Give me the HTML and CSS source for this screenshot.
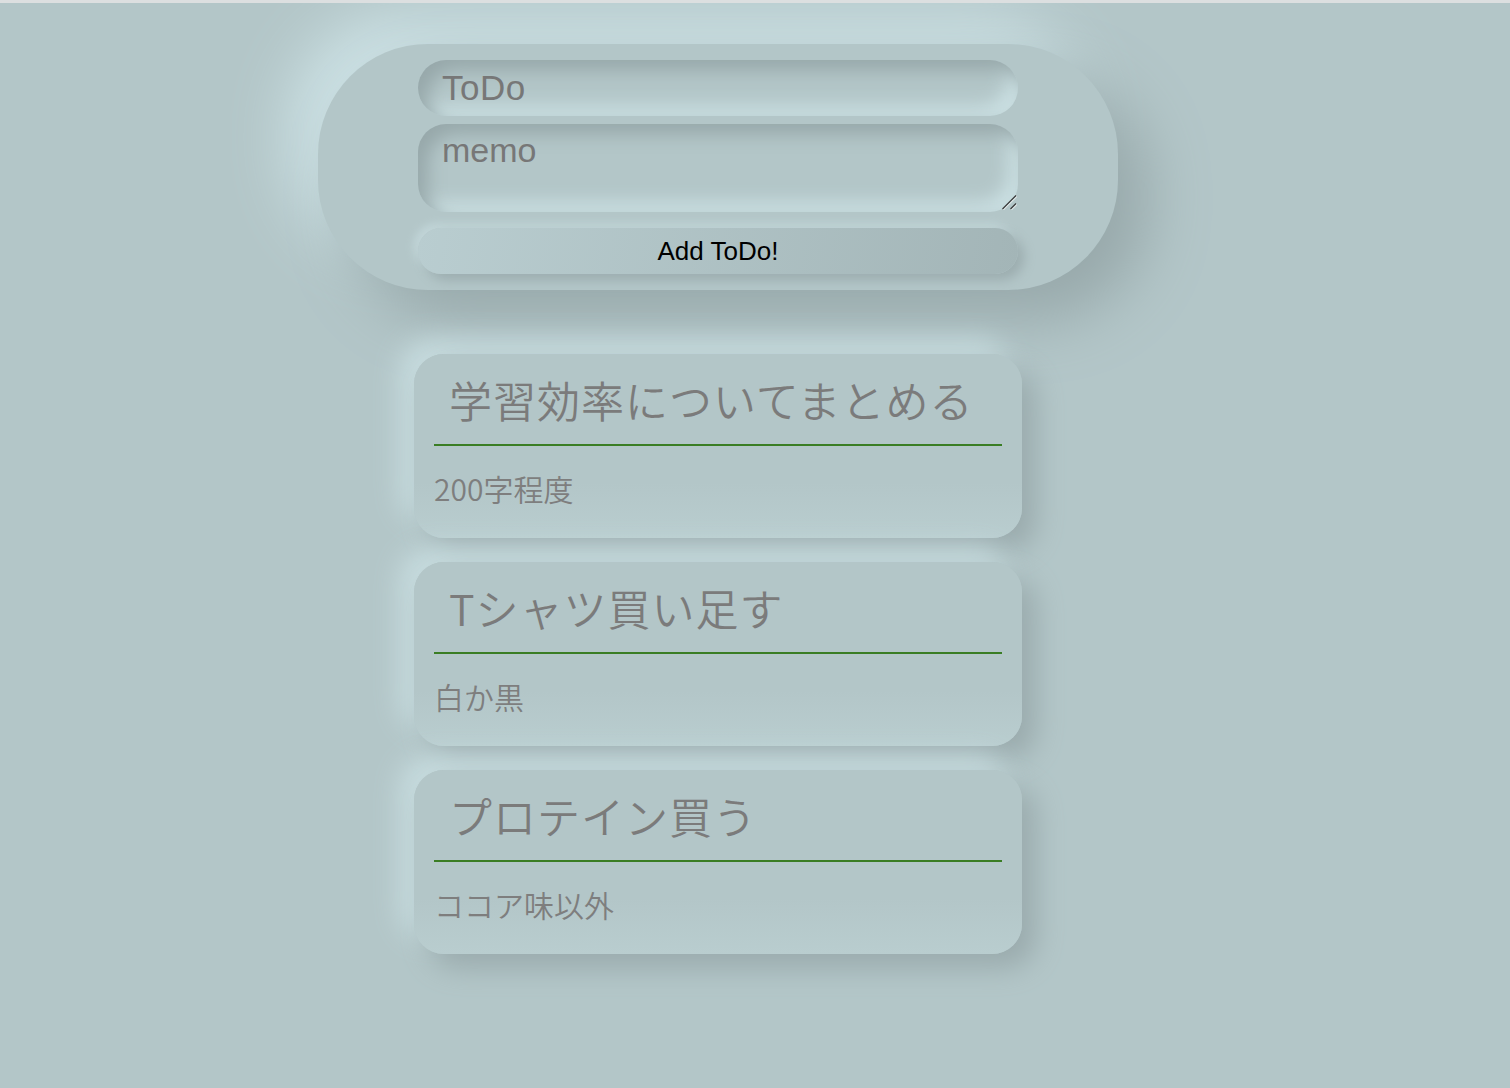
FILE: index.html
```html
<!DOCTYPE html>
<html lang="ja">
<head>
<meta charset="utf-8">
<title>ToDo</title>
<link rel="stylesheet" href="styles.css">
</head>
<body>
<div class="page">
  <form class="add-form">
    <input class="field field-title" type="text" placeholder="ToDo">
    <div class="memo-wrap">
      <textarea class="field field-memo" placeholder="memo"></textarea>
      <svg class="resizer" width="16" height="16" viewBox="0 0 16 16" aria-hidden="true">
        <line x1="1.5" y1="15" x2="15" y2="1.5" stroke="#ffffff" stroke-width="1.2" stroke-opacity="0.7" transform="translate(0.8,0.8)"/>
        <line x1="1.5" y1="15" x2="15" y2="1.5" stroke="#3a3a3a" stroke-width="1.3"/>
        <line x1="9.5" y1="15" x2="15" y2="9.5" stroke="#ffffff" stroke-width="1.2" stroke-opacity="0.7" transform="translate(0.8,0.8)"/>
        <line x1="9.5" y1="15" x2="15" y2="9.5" stroke="#3a3a3a" stroke-width="1.3"/>
      </svg>
    </div>
    <button class="add-btn" type="button">Add ToDo!</button>
  </form>
  <ul class="list">
    <li class="card">
      <h2 class="card-title">学習効率についてまとめる</h2>
      <p class="card-memo">200字程度</p>
    </li>
    <li class="card">
      <h2 class="card-title">Tシャツ買い足す</h2>
      <p class="card-memo">白か黒</p>
    </li>
    <li class="card">
      <h2 class="card-title">プロテイン買う</h2>
      <p class="card-memo">ココア味以外</p>
    </li>
  </ul>
</div>
</body>
</html>
```

FILE: styles.css
```css
html, body {
  margin: 0;
  padding: 0;
  background: #b3c6c8;
}
body {
  font-family: "Liberation Sans", Arial, "Noto Sans CJK JP", sans-serif;
  min-height: 1088px;
  border-top: 3px solid #dcdfe0;
  box-sizing: border-box;
}
.page {
  padding: 41px 0 40px 318px;
}
.add-form {
  width: 800px;
  box-sizing: border-box;
  padding: 16px 100px;
  border-radius: 110px;
  background: #b3c6c8;
  box-shadow: 30px 30px 60px #98a9ab, -30px -30px 60px #cde2e5;
  display: flex;
  flex-direction: column;
}
.field {
  display: block;
  width: 600px;
  box-sizing: border-box;
  border: none;
  outline: none;
  background: #b3c6c8;
  font-family: "Liberation Sans", Arial, sans-serif;
  font-size: 34px;
  color: #6e6e6e;
  box-shadow: inset 10px 10px 18px #97a8aa, inset -10px -10px 18px #cbe0e3;
}
.field::placeholder {
  color: #777777;
}
.field-title {
  height: 56px;
  border-radius: 28px;
  padding: 0 24px;
  font-size: 35px;
  letter-spacing: 0.5px;
}
.memo-wrap {
  position: relative;
  margin-top: 8px;
  width: 600px;
  height: 88px;
}
.field-memo {
  height: 88px;
  border-radius: 28px;
  padding: 6px 24px;
  line-height: 40px;
  resize: none;
}
.resizer {
  position: absolute;
  right: 1px;
  bottom: 2px;
  pointer-events: none;
}
.add-btn {
  margin-top: 16px;
  height: 46px;
  width: 600px;
  border: none;
  border-radius: 23px;
  background: linear-gradient(100deg, #b9cdd0 0%, #a3b5b7 100%);
  box-shadow: 6px 6px 12px #9cadaf, -4px -4px 10px #c4d8db;
  font-family: "Liberation Sans", Arial, sans-serif;
  font-size: 26px;
  color: #000;
  cursor: pointer;
}
.list {
  list-style: none;
  margin: 64px 0 0 96px;
  padding: 0;
  display: flex;
  flex-direction: column;
  gap: 24px;
}
.card {
  width: 608px;
  height: 184px;
  box-sizing: border-box;
  padding: 0 20px;
  border-radius: 30px;
  background: linear-gradient(180deg, #b3c6c8 70%, #b9cdcf 100%);
  box-shadow: 14px 14px 28px #9aabad, -14px -14px 28px #c8dde0;
}
.card-title {
  margin: 0;
  height: 92px;
  box-sizing: border-box;
  padding: 17px 0 0 15px;
  border-bottom: 2px solid #3a7d24;
  font-family: "Noto Sans CJK JP", sans-serif;
  font-weight: 350;
  font-size: 43px;
  line-height: 56px;
  color: #7b7b7b;
  letter-spacing: 1px;
}
.card-memo {
  margin: 0;
  padding-top: 22px;
  font-family: "Noto Sans CJK JP", sans-serif;
  font-weight: 350;
  font-size: 30px;
  line-height: 40px;
  color: #7e7e7e;
}
```
